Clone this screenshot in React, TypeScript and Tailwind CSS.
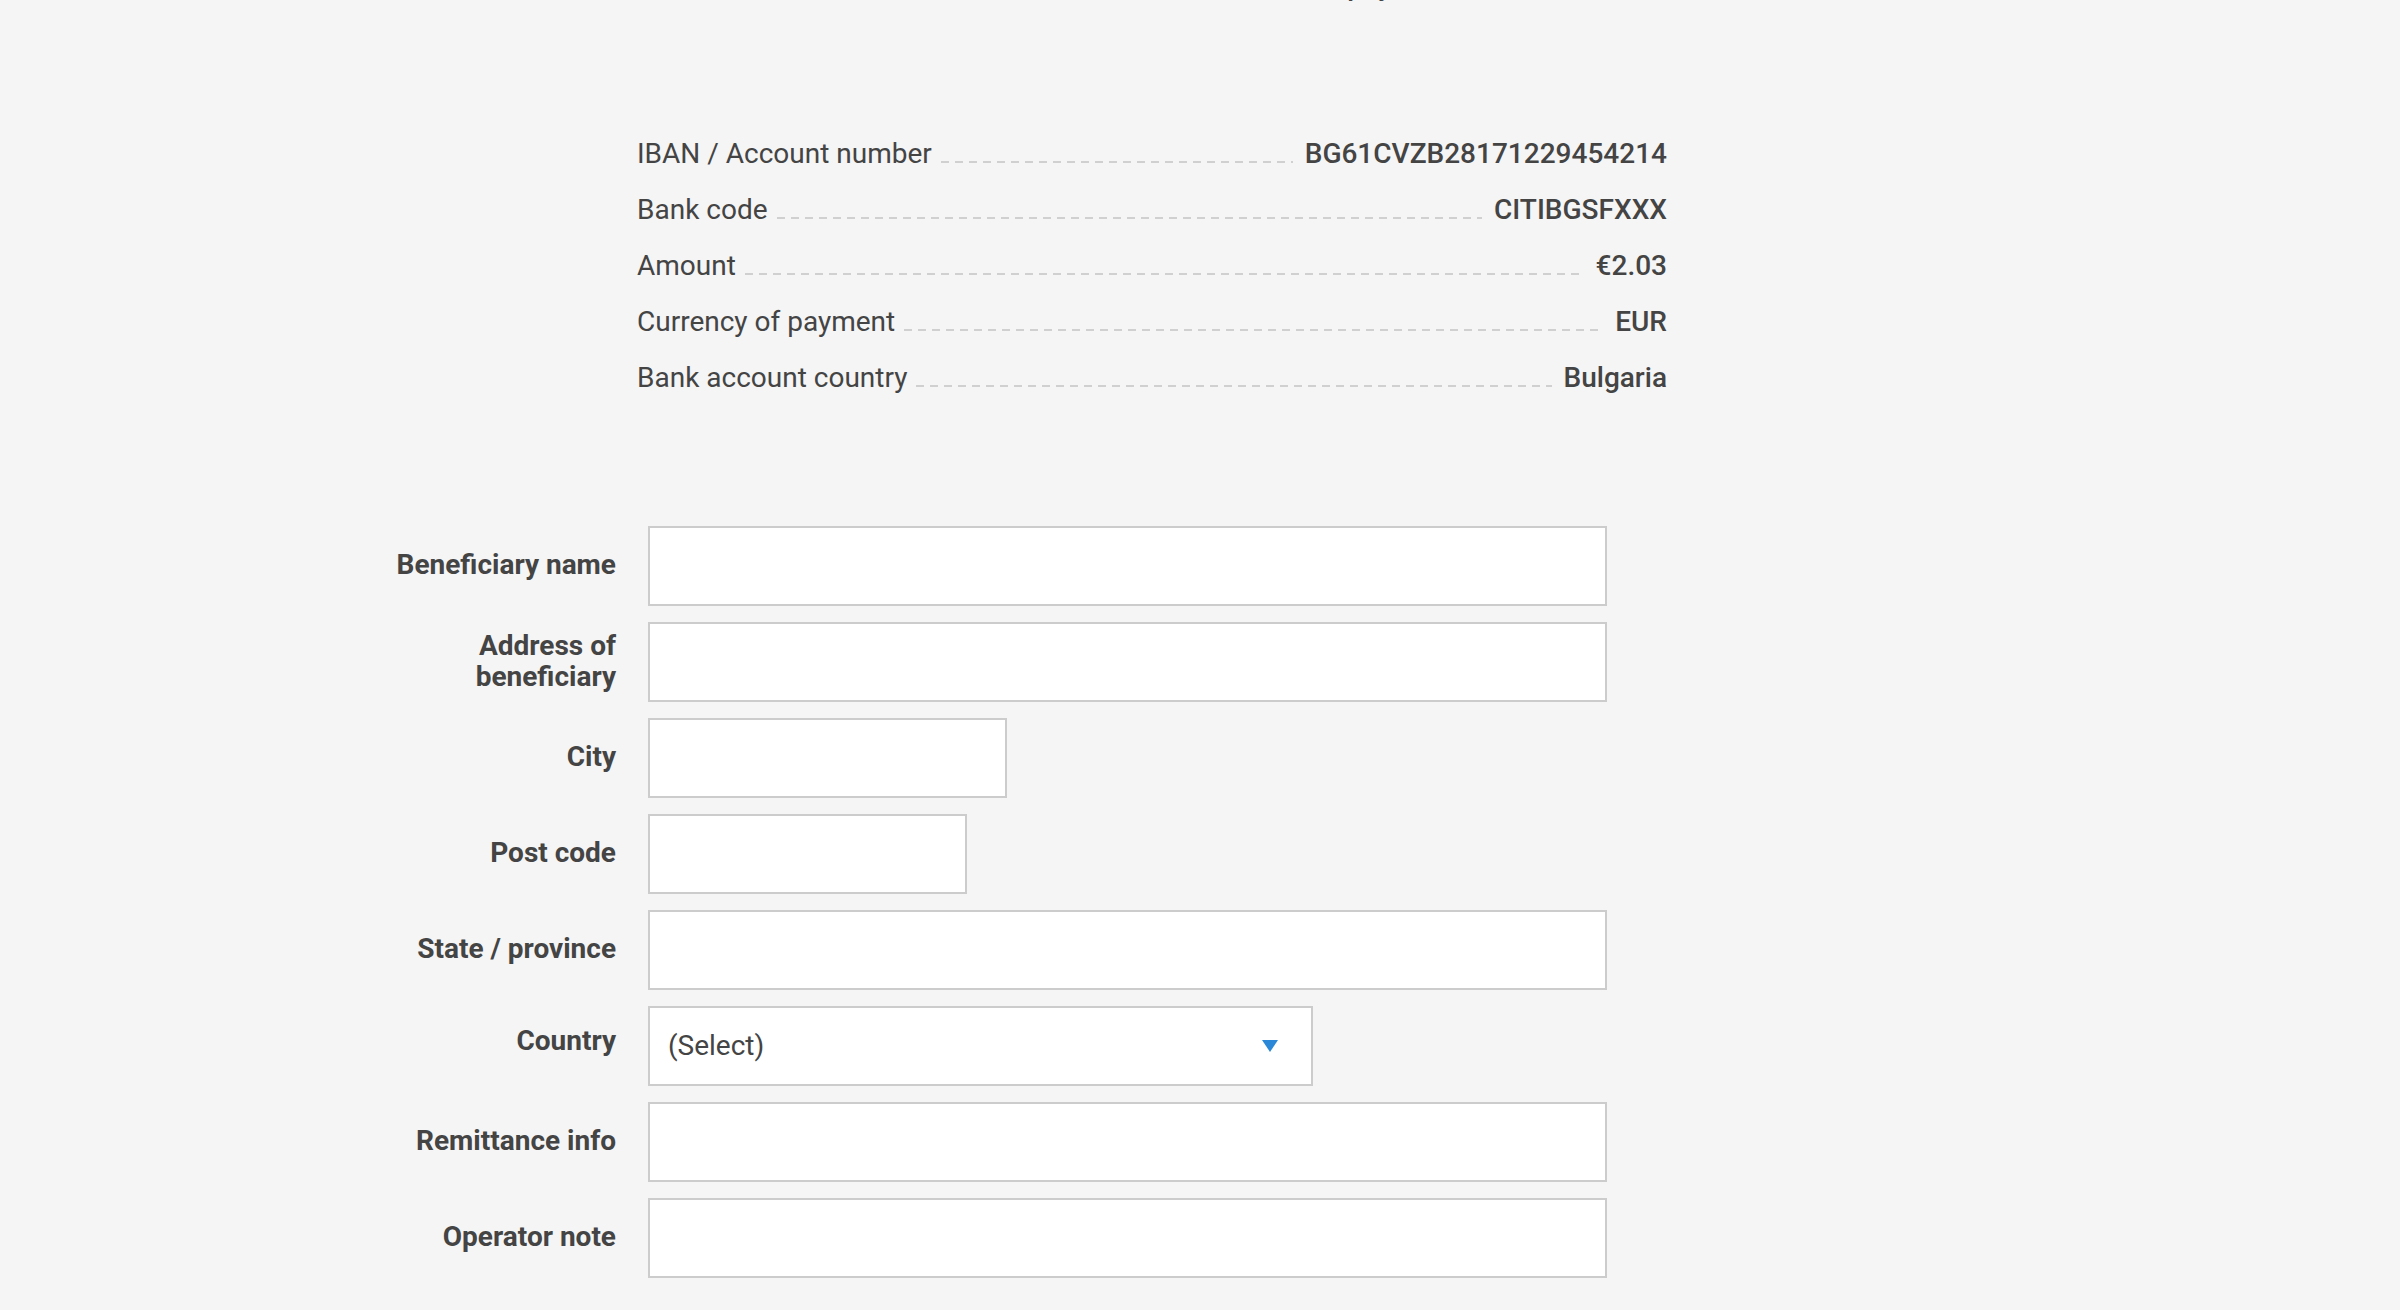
const summary = [
  { label: 'IBAN / Account number', value: 'BG61CVZB28171229454214' },
  { label: 'Bank code', value: 'CITIBGSFXXX' },
  { label: 'Amount', value: '€2.03' },
  { label: 'Currency of payment', value: 'EUR' },
  { label: 'Bank account country', value: 'Bulgaria' },
];

type Field = { label: string; width: string; select?: boolean; nudge?: boolean };

const fields: Field[] = [
  { label: 'Beneficiary name', width: 'w-[959px]' },
  { label: 'Address of beneficiary', width: 'w-[959px]' },
  { label: 'City', width: 'w-[359px]' },
  { label: 'Post code', width: 'w-[319px]' },
  { label: 'State / province', width: 'w-[959px]' },
  { label: 'Country', width: 'w-[665px]', select: true, nudge: true },
  { label: 'Remittance info', width: 'w-[959px]' },
  { label: 'Operator note', width: 'w-[959px]' },
];

const SummaryRow = ({ label, value }: { label: string; value: string }) => (
  <div className="flex items-baseline h-[56px] leading-[56px]">
    <span className="whitespace-nowrap">{label}</span>
    <div className="flex-1 h-[2px] ml-[9px] mr-[12px] bg-[repeating-linear-gradient(90deg,#d0d0d0_0_8px,transparent_8px_14px)]" />
    <span className="whitespace-nowrap font-medium">{value}</span>
  </div>
);

const App = () => {
  return (
    <div className="min-h-[1310px] bg-[#f5f5f5] text-[#444] font-['Roboto','Liberation_Sans',sans-serif] text-[28px] overflow-hidden">
      <div className="w-[1616px] mx-auto">
        {/* page heading, scrolled mostly out of view */}
        <h1 className="-mt-[34px] h-[40px] leading-[40px] text-right font-medium pr-[552px] whitespace-nowrap">
          Enter the details for this payment
        </h1>

        <div className="ml-[245px] w-[1030px] mt-[120px]">
          {summary.map((row) => (
            <SummaryRow key={row.label} label={row.label} value={row.value} />
          ))}
        </div>

        <div className="mt-[120px] grid grid-cols-[224px_1fr] gap-x-8 gap-y-4">
          {fields.map((f) => (
            <div key={f.label} className="contents">
              <label
                className={`flex items-center justify-end text-right font-bold leading-[31px] ${
                  f.nudge ? 'pb-[12px]' : 'pb-[3px]'
                }`}
              >
                {f.label}
              </label>
              {f.select ? (
                <div
                  className={`${f.width} h-[80px] border-2 border-[#cccccc] bg-white flex items-center pl-[18px] pr-[33px]`}
                >
                  <span className="flex-1">(Select)</span>
                  <svg width="16" height="12" viewBox="0 0 16 12">
                    <path d="M0 0 H16 L8 12 Z" fill="#2b88d8" />
                  </svg>
                </div>
              ) : (
                <input
                  type="text"
                  className={`${f.width} h-[80px] border-2 border-[#cccccc] bg-white px-[18px] outline-none`}
                />
              )}
            </div>
          ))}
        </div>
      </div>
    </div>
  );
};

export default App;
